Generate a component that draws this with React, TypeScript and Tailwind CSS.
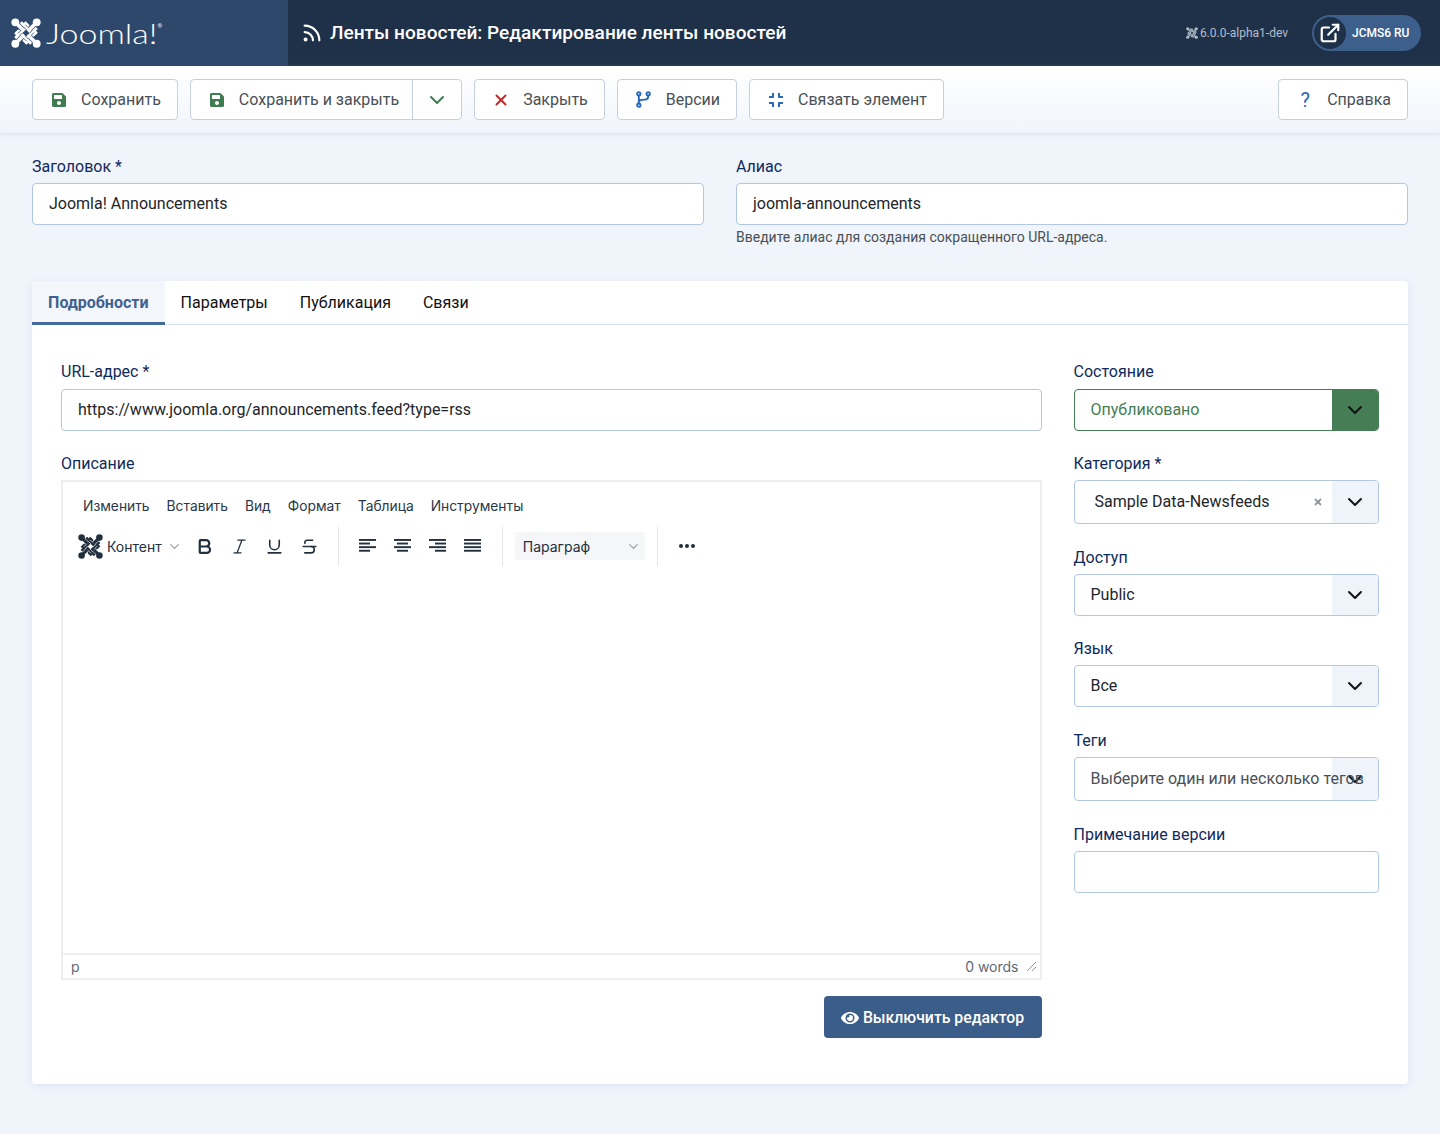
import type { ReactNode } from "react";
import { ChevronDown, ExternalLink, Bold, Italic, Rss, Underline, Strikethrough, X } from "lucide-react";
import { FaCompress, FaEye, FaSave, FaTimes } from "react-icons/fa";

function JoomlaMark({ size, color, bg }: { size: number; color: string; bg: string }) {
  const turns = [0, 90, 180, 270];
  return (
    <svg width={size} height={size} viewBox="0 0 32 32" fill="none" strokeLinejoin="round" aria-hidden="true">
      {turns.map((r) => (
        <g key={r} transform={`rotate(${r} 16 16)`} stroke={color} strokeWidth="3.2">
          <path d="M4.6 4.6 L12 12" strokeWidth="3.8" />
          <path d="M10.5 4.5 L24 18 L27.5 14.5" />
        </g>
      ))}
      {/* cuts that make the bands look woven */}
      {turns.map((r) => (
        <g key={r} transform={`rotate(${r} 16 16)`} stroke={bg} strokeWidth="0.9">
          <path d="M13.4 9.5 L16.5 12.6" />
          <path d="M15.5 7.4 L18.6 10.5" />
        </g>
      ))}
      {turns.map((r) => (
        <circle key={r} cx="4.6" cy="4.6" r="4.2" fill={color} transform={`rotate(${r} 16 16)`} />
      ))}
    </svg>
  );
}

function BranchIcon() {
  return (
    <svg width="15" height="17" viewBox="0 0 15 17" fill="none" stroke="#2a69b8" strokeWidth="1.9" aria-hidden="true">
      <circle cx="2.8" cy="2.8" r="1.7" />
      <circle cx="2.8" cy="14.2" r="1.7" />
      <circle cx="12.2" cy="2.8" r="1.7" />
      <path d="M2.8 4.5 V12.5 M12.2 4.5 V5.5 Q12.2 8.4 9 8.6 L5.8 8.9 Q3.2 9.2 2.8 11.5" />
    </svg>
  );
}

function ToolbarButton({ icon, label }: { icon: ReactNode; label: string }) {
  return (
    <button className="flex h-[41px] items-center gap-3 rounded-[4px] border border-[#c5cfdd] bg-white px-4 text-[#495057]">
      <span className="flex w-5 justify-center">{icon}</span>
      {label}
    </button>
  );
}

function Field({ label, children, className }: { label: string; children: ReactNode; className?: string }) {
  return (
    <div className={className}>
      <label className="mb-[4px] block h-[24px] leading-6 text-[#0f2a5c]">{label}</label>
      {children}
    </div>
  );
}

function TextBox({ value, className }: { value: string; className?: string }) {
  return (
    <div className={`flex h-[42px] items-center rounded-[4px] border border-[#b3c6e2] bg-white px-4 text-[#22262a] ${className ?? ""}`}>
      {value}
    </div>
  );
}

function SelectBox({ value, tall, children }: { value: string; tall?: boolean; children?: ReactNode }) {
  return (
    <div className={`relative flex items-center overflow-hidden rounded-[4px] border border-[#b3c6e2] bg-white ${tall ? "h-[44px]" : "h-[42px]"}`}>
      <span className="absolute inset-y-0 right-0 flex w-[46px] items-center justify-center bg-[#eff4fb]">
        <ChevronDown className="size-6 text-[#111]" strokeWidth={2} />
      </span>
      {children ?? <span className="relative pl-4 text-[#22262a]">{value}</span>}
    </div>
  );
}

function AlignIcon({ rows }: { rows: [number, number][] }) {
  return (
    <svg width="18" height="16" viewBox="0 0 18 16" fill="#222f3e" aria-hidden="true">
      {rows.map(([x, w], i) => (
        <rect key={i} x={x} y={1 + i * 3.6} width={w} height="1.9" />
      ))}
    </svg>
  );
}

function EditorIcon({ children }: { children: ReactNode }) {
  return <span className="flex w-[35px] justify-center text-[#222f3e]">{children}</span>;
}

export default function App() {
  return (
    <div className="min-h-[1134px] bg-[#f0f4fb] font-['Roboto',sans-serif] text-[16px]">
      <header className="flex h-[66px] items-center bg-[#1f3149] text-white">
        <div className="flex h-full w-[288px] items-center bg-[#2e486c] pl-[11px]">
          <JoomlaMark size={30} color="#fff" bg="#2e486c" />
          <span className="ml-[5px] origin-left scale-x-[1.26] font-['Lato',sans-serif] text-[27px] leading-none font-light">Joomla!</span>
          <span className="ml-[23px] -translate-y-[7px] text-[6px] leading-none">®</span>
        </div>
        <div className="flex items-center gap-[7px] pl-[13px] text-[19.07px] font-medium">
          <Rss className="size-[22px]" strokeWidth={2.4} />
          Ленты новостей: Редактирование ленты новостей
        </div>
        <div className="ml-auto flex items-center gap-[2px] text-[12px] text-[#b4bdc9]">
          <JoomlaMark size={12} color="#b4bdc9" bg="#1f3149" />
          6.0.0-alpha1-dev
        </div>
        <div className="mr-[19px] ml-[24px] flex h-[36px] w-[109px] items-center rounded-full bg-[#3d5f8c] pl-[2px] text-[12px] font-medium">
          <span className="flex size-[32px] items-center justify-center rounded-full bg-[#1f3149]">
            <ExternalLink className="size-[22px]" strokeWidth={2.4} />
          </span>
          <span className="ml-[6px]">JCMS6 RU</span>
        </div>
      </header>

      <div className="flex h-[67px] items-center gap-3 bg-gradient-to-b from-white to-[#f1f5fb] px-8 shadow-[0_1px_4px_rgba(170,190,220,0.35)]">
        <ToolbarButton icon={<FaSave className="size-4 text-[#3f7d51]" />} label="Сохранить" />
        <div className="flex h-[41px] items-center rounded-[4px] border border-[#c5cfdd] bg-white text-[#495057]">
          <span className="flex h-full items-center gap-3 pr-[13px] pl-4">
            <span className="flex w-5 justify-center">
              <FaSave className="size-4 text-[#3f7d51]" />
            </span>
            Сохранить и закрыть
          </span>
          <span className="flex h-full w-[49px] items-center justify-center border-l border-[#c5cfdd]">
            <ChevronDown className="size-[24px] text-[#3f7d51]" strokeWidth={2} />
          </span>
        </div>
        <ToolbarButton icon={<X className="size-[18px] text-[#c52827]" strokeWidth={2.6} />} label="Закрыть" />
        <ToolbarButton icon={<BranchIcon />} label="Версии" />
        <ToolbarButton icon={<FaCompress className="size-[16px] text-[#2a69b8]" />} label="Связать элемент" />
        <div className="ml-auto">
          <ToolbarButton icon={<span className="text-[20px] leading-none text-[#2a69b8]">?</span>} label="Справка" />
        </div>
      </div>

      <main className="px-8 pt-[22px]">
        <div className="grid grid-cols-2 gap-8">
          <Field label="Заголовок *">
            <TextBox value="Joomla! Announcements" />
          </Field>
          <Field label="Алиас">
            <TextBox value="joomla-announcements" />
            <p className="mt-[4px] text-[14px] leading-[17px] text-[#495057]">Введите алиас для создания сокращенного URL-адреса.</p>
          </Field>
        </div>

        <section className="mt-[35px] h-[803px] rounded-[4px] bg-white shadow-[0_2px_6px_rgba(170,190,220,0.25)]">
          <nav className="flex h-[44px] border-b border-[#d5e0f0] text-[#111]">
            <span className="flex h-[44px] w-[132.6px] items-center justify-center rounded-tl-[4px] border-b-[3px] border-[#45699a] bg-[#f3f6fa] pt-[3px] font-bold text-[#3f6190]">Подробности</span>
            <span className="flex items-center px-4">Параметры</span>
            <span className="flex items-center px-4">Публикация</span>
            <span className="flex items-center px-4">Связи</span>
          </nav>

          <div className="flex gap-8 px-[29px] pt-[35px]">
            <div className="w-[980.5px]">
              <Field label="URL-адрес *">
                <TextBox value="https://www.joomla.org/announcements.feed?type=rss" className="mt-[5px]" />
              </Field>
              <Field label="Описание" className="mt-[21px]">
                <div className="flex h-[500px] flex-col border-2 border-[#eeeeee] font-['Inter',sans-serif] text-[14px] text-[#222f3e]">
                  <div className="flex h-[40px] items-end gap-[17px] pb-[5px] pl-[20px] text-[13.8px] text-[#29374a]">
                    <span>Изменить</span>
                    <span>Вставить</span>
                    <span>Вид</span>
                    <span>Формат</span>
                    <span>Таблица</span>
                    <span>Инструменты</span>
                  </div>
                  <div className="flex h-[48px] items-center pl-[15px]">
                    <JoomlaMark size={25} color="#222f3e" bg="#fff" />
                    <span className="ml-[4px]">Контент</span>
                    <ChevronDown className="ml-[5px] size-[15px] text-[#9aa1aa]" />
                    <span className="ml-[5px] flex">
                      <EditorIcon><Bold className="size-[19px]" strokeWidth={2.8} /></EditorIcon>
                      <EditorIcon><Italic className="size-[19px]" strokeWidth={1.6} /></EditorIcon>
                      <EditorIcon><Underline className="size-[19px]" strokeWidth={2} /></EditorIcon>
                      <EditorIcon><Strikethrough className="size-[19px]" strokeWidth={2} /></EditorIcon>
                    </span>
                    <span className="mr-[12px] ml-[11px] h-[39px] w-px bg-[#e3e5e8]" />
                    <span className="flex">
                      <EditorIcon><AlignIcon rows={[[0, 17], [0, 11], [0, 17], [0, 11]]} /></EditorIcon>
                      <EditorIcon><AlignIcon rows={[[0, 17], [3, 11], [0, 17], [3, 11]]} /></EditorIcon>
                      <EditorIcon><AlignIcon rows={[[0, 17], [6, 11], [0, 17], [6, 11]]} /></EditorIcon>
                      <EditorIcon><AlignIcon rows={[[0, 17], [0, 17], [0, 17], [0, 17]]} /></EditorIcon>
                    </span>
                    <span className="mr-[12px] ml-[11px] h-[39px] w-px bg-[#e3e5e8]" />
                    <span className="flex h-[28px] w-[130px] items-center justify-between rounded-[3px] bg-[#f5f6f7] pr-[4px] pl-[8px]">
                      Параграф
                      <ChevronDown className="size-[15px] text-[#9aa1aa]" />
                    </span>
                    <span className="mx-[12px] h-[39px] w-px bg-[#e3e5e8]" />
                    <span className="ml-[9px] flex gap-[2px]">
                      <i className="size-[4px] rounded-full bg-[#222f3e]" />
                      <i className="size-[4px] rounded-full bg-[#222f3e]" />
                      <i className="size-[4px] rounded-full bg-[#222f3e]" />
                    </span>
                  </div>
                  <div className="flex-1" />
                  <div className="flex h-[25px] items-center justify-between border-t-2 border-[#eeeeee] pr-[3px] pl-[8px] text-[#5f6975]">
                    <span>p</span>
                    <span className="flex items-center gap-[7px]">
                      0 words
                      <svg width="11" height="11" viewBox="0 0 11 11" stroke="#8f96a0" fill="none" aria-hidden="true">
                        <path d="M1 10 L10 1 M6 10 L10 6" />
                      </svg>
                    </span>
                  </div>
                </div>
              </Field>
              <div className="mt-[16px] flex justify-end">
                <button className="flex h-[42px] w-[218px] items-center justify-center gap-[4px] rounded-[4px] bg-[#3b5d8a] pt-[1px] text-[15.8px] font-medium text-white">
                  <FaEye className="size-[18px]" />
                  Выключить редактор
                </button>
              </div>
            </div>

            <div className="w-[305.5px]">
              <Field label="Состояние">
                <div className="relative mt-[5px] flex h-[42px] items-center overflow-hidden rounded-[4px] border border-[#457d54] bg-white pl-4 text-[#457d54]">
                  Опубликовано
                  <span className="absolute inset-y-0 right-0 flex w-[46px] items-center justify-center bg-[#457d54]">
                    <ChevronDown className="size-6 text-[#111]" strokeWidth={2} />
                  </span>
                </div>
              </Field>
              <Field label="Категория *" className="mt-[21px]">
                <SelectBox value="" tall>
                  <span className="relative pl-5 text-[#22262a]">Sample Data-Newsfeeds</span>
                  <FaTimes className="absolute right-[55px] size-[10px] text-[#8a9099]" />
                </SelectBox>
              </Field>
              <Field label="Доступ" className="mt-[22px]">
                <SelectBox value="Public" />
              </Field>
              <Field label="Язык" className="mt-[21px]">
                <SelectBox value="Все" />
              </Field>
              <Field label="Теги" className="mt-[22px]">
                <SelectBox value="" tall>
                  <span className="relative pl-4 whitespace-nowrap text-[#495057]">Выберите один или несколько тегов</span>
                </SelectBox>
              </Field>
              <Field label="Примечание версии" className="mt-[22px]">
                <TextBox value="" />
              </Field>
            </div>
          </div>
        </section>
      </main>
    </div>
  );
}
